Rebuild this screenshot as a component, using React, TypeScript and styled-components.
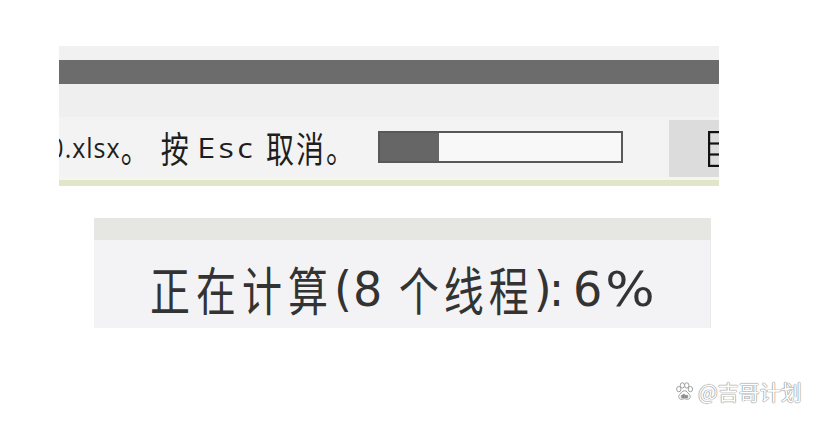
import React from "react";
import styled, { createGlobalStyle } from "styled-components";

const Global = createGlobalStyle`
  html, body { margin: 0; padding: 0; background: #ffffff; }
  body { width: 820px; height: 422px; overflow: hidden; position: relative;
    font-family: "Noto Sans CJK SC", "Noto Sans", sans-serif; }
`;

const Page = styled.div`
  padding-top: 46px;
  display: flex;
  flex-direction: column;
`;

/* text run: CJK glyphs and Latin glyphs are set as separate runs */
const Run = styled.span<{
  $size: number;
  $ls?: number;
  $sx?: number;
  $sy: number;
  $font?: string;
  $ml?: number;
  $mr?: number;
}>`
  display: inline-block;
  white-space: pre;
  font-family: ${(p) => p.$font ?? `"Noto Sans CJK SC"`}, sans-serif;
  font-size: ${(p) => p.$size}px;
  letter-spacing: ${(p) => p.$ls ?? 0}px;
  margin-left: ${(p) => p.$ml ?? 0}px;
  margin-right: ${(p) => p.$mr ?? 0}px;
  line-height: 1;
  transform: scale(${(p) => p.$sx ?? 1}, ${(p) => p.$sy});
`;

const Line = styled.div<{ $color: string }>`
  display: flex;
  align-items: center;
  white-space: nowrap;
  color: ${(p) => p.$color};
`;

/* Excel window bottom: scrollbar, sheet tabs strip, status bar */
const Window = styled.div`
  margin-left: 59px;
  width: 660px;
  display: flex;
  flex-direction: column;
`;

const Strip = styled.div<{ $h: number; $bg: string }>`
  height: ${(p) => p.$h}px;
  background: ${(p) => p.$bg};
`;

const StatusBar = styled.div`
  height: 60px;
  background: #f3f3f3;
  display: flex;
  align-items: stretch;
`;

const MessageClip = styled.div`
  width: 297px;
  overflow: hidden;
  display: flex;
  justify-content: flex-end;
  align-items: center;
`;

const ProgressWrap = styled.div`
  margin-left: 22px;
  display: flex;
  align-items: center;
`;

const Progress = styled.div`
  width: 245px;
  height: 32px;
  box-sizing: border-box;
  border: 2px solid #585858;
  background: #f8f8f8;
  display: flex;
`;

const ProgressFill = styled.div`
  background: #666666;
  height: 100%;
`;

const ViewButtons = styled.div`
  margin-left: auto;
  margin-top: 3px;
  width: 50px;
  background: #dcdcdc;
  display: flex;
  align-items: center;
  justify-content: flex-end;
  overflow: hidden;
`;

const GreenLine = styled.div`
  height: 9px;
  background: linear-gradient(#f6f6ef 0 3px, #e2e6c9 3px 100%);
`;

/* calculation progress panel */
const Calc = styled.div`
  margin-top: 32px;
  margin-left: 94px;
  width: 617px;
  display: flex;
  flex-direction: column;
`;

const CalcHeader = styled.div`
  height: 22px;
  background: #e6e7e2;
`;

const CalcBody = styled.div`
  height: 88px;
  background: #f3f3f5;
  border-right: 1px solid #e8e8ea;
  box-sizing: border-box;
  display: flex;
  align-items: center;
  padding-left: 56px;
  padding-top: 10px;
`;

const Watermark = styled.div`
  position: absolute;
  left: 675px;
  top: 381px;
  display: flex;
  align-items: center;
  gap: 4px;
  font-family: "Noto Sans CJK SC", sans-serif;
  font-size: 21px;
  line-height: 1;
  color: #ffffff;
  text-shadow: 0 0 1px #8a8a8a, 0 0 1px #8a8a8a, 0 0 1px #8a8a8a;
`;

const GridIcon = () => (
  <svg width="14" height="36" viewBox="0 0 14 36" style={{ marginRight: -3 }}>
    <g fill="none" stroke="#111" strokeWidth="2.2">
      <rect x="1.1" y="1.1" width="11.8" height="33.8" />
      <line x1="1" y1="12.5" x2="13" y2="12.5" />
      <line x1="1" y1="23.5" x2="13" y2="23.5" />
    </g>
  </svg>
);

const Paw = () => (
  <svg width="19" height="19" viewBox="0 0 20 20">
    <g fill="#fff" stroke="#9a9a9a" strokeWidth="1">
      <ellipse cx="4" cy="7.5" rx="2.3" ry="2.8" />
      <ellipse cx="7.8" cy="3.6" rx="2.3" ry="2.8" />
      <ellipse cx="12.4" cy="3.6" rx="2.3" ry="2.8" />
      <ellipse cx="16.2" cy="7.5" rx="2.3" ry="2.8" />
      <path d="M10 9.2c2.4 0 3.4 2.2 5 3.8 1.6 1.6 1.4 5-1.4 5.2-1.4.1-2.4-.6-3.6-.6s-2.2.7-3.6.6C3.6 18 3.4 14.6 5 13c1.6-1.6 2.6-3.8 5-3.8z" />
    </g>
    <text x="10" y="16.6" fontSize="5.6" textAnchor="middle" fill="#8a8a8a" fontFamily="Liberation Sans, sans-serif" fontWeight="bold">du</text>
  </svg>
);

const OPEN = `"Open Sans"`;
const DEJAVU = `"DejaVu Sans"`;

export default function App() {
  const percent = 6;
  return (
    <>
      <Global />
      <Page>
        <Window>
          <Strip $h={14} $bg="#f1f1f1" />
          <Strip $h={24} $bg="#6c6c6c" />
          <Strip $h={33} $bg="#efefef" />
          <StatusBar>
            <MessageClip>
              <Line $color="#1e1e1e">
                <Run $size={28} $ls={2} $sy={1.3}>正在打开 工作簿</Run>
                <Run $font={OPEN} $size={25} $ls={1} $sy={1.1}>10.xlsx</Run>
                <Run $size={28} $sy={1.3} $mr={12}>。</Run>
                <Run $size={28} $sy={1.3}>按</Run>
                <Run $font={OPEN} $size={28} $ls={3} $sx={1.15} $sy={1} $ml={12} $mr={14}>Esc</Run>
                <Run $size={28} $ls={2} $sy={1.3}>取消。</Run>
              </Line>
            </MessageClip>
            <ProgressWrap>
              <Progress>
                <ProgressFill style={{ width: `${percent * 4.1}%` }} />
              </Progress>
            </ProgressWrap>
            <ViewButtons>
              <GridIcon />
            </ViewButtons>
          </StatusBar>
          <GreenLine />
        </Window>
        <Calc>
          <CalcHeader />
          <CalcBody>
            <Line $color="#333333">
              <Run $size={40} $ls={6} $sy={1.3}>正在计算</Run>
              <Run $font={DEJAVU} $size={46} $ls={1} $sy={1.05}>(8 </Run>
              <Run $size={40} $ls={5} $sy={1.3}>个线程</Run>
              <Run $font={DEJAVU} $size={46} $ls={-3} $sy={1.05}>): </Run>
              <Run $font={DEJAVU} $size={46} $ls={3} $sy={1.05}>{percent}</Run>
              <Run $font={DEJAVU} $size={52} $sy={0.93}>%</Run>
            </Line>
          </CalcBody>
        </Calc>
      </Page>
      <Watermark>
        <Paw />
        <span>@吉哥计划</span>
      </Watermark>
    </>
  );
}
